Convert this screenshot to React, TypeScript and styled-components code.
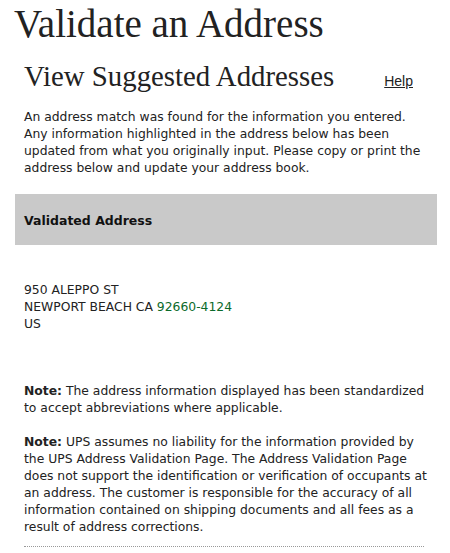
import React from 'react';
import styled, { createGlobalStyle } from 'styled-components';

const GlobalStyle = createGlobalStyle`
  body {
    margin: 0;
    background: #fff;
    color: #222;
    font-family: Tahoma, 'DejaVu Sans', sans-serif;
  }
`;

const Page = styled.div`
  width: 450px;
  padding: 0 13px 0 15px;
  box-sizing: border-box;
`;

const Title = styled.h1`
  margin: 0;
  padding: 4px 0 0 0;
  margin-left: -1px;
  font-family: Georgia, 'Liberation Serif', serif;
  font-weight: normal;
  font-size: 39px;
  line-height: 40px;
  color: #222;
`;

const HeaderRow = styled.div`
  display: flex;
  align-items: baseline;
  justify-content: space-between;
  padding: 16px 24px 0 9px;
`;

const SubTitle = styled.h2`
  margin: 0;
  font-family: Georgia, 'Liberation Serif', serif;
  font-weight: normal;
  font-size: 28.8px;
  line-height: 32px;
  color: #222;
`;

const HelpLink = styled.a`
  font-family: 'Liberation Sans', Arial, sans-serif;
  font-size: 14px;
  color: #222;
  text-decoration: underline;
`;

const Text = styled.p<{ $top?: number }>`
  margin: ${(p) => p.$top ?? 0}px 0 0 0;
  padding: 0 0 0 9px;
  font-family: 'DejaVu Sans', sans-serif;
  font-size: 12.35px;
  line-height: 17px;
  white-space: nowrap;
  color: #222;
`;

const Bar = styled.div`
  margin-top: 17px;
  height: 50px;
  background: #c9c9c9;
  display: flex;
  align-items: center;
  padding: 1px 0 0 9px;
  font-family: 'DejaVu Sans', sans-serif;
  font-size: 12.5px;
  font-weight: bold;
  color: #111;
`;

const Zip = styled.span`
  color: #0b6a2a;
`;

const Rule = styled.hr`
  margin: 10px 13px 0 9px;
  border: 0;
  border-top: 1px dotted #999;
`;

const lines = (rows: React.ReactNode[]) =>
  rows.map((row, idx) => (
    <React.Fragment key={idx}>
      {idx > 0 && <br />}
      {row}
    </React.Fragment>
  ));

export default function App() {
  return (
    <Page>
      <GlobalStyle />
      <Title>Validate an Address</Title>
      <HeaderRow>
        <SubTitle>View Suggested Addresses</SubTitle>
        <HelpLink href="#">Help</HelpLink>
      </HeaderRow>
      <Text $top={17}>
        {lines([
          'An address match was found for the information you entered.',
          'Any information highlighted in the address below has been',
          'updated from what you originally input. Please copy or print the',
          'address below and update your address book.',
        ])}
      </Text>
      <Bar>Validated Address</Bar>
      <Text $top={37}>
        {lines([
          '950 ALEPPO ST',
          <>
            NEWPORT BEACH CA <Zip>92660-4124</Zip>
          </>,
          'US',
        ])}
      </Text>
      <Text $top={50}>
        {lines([
          <>
            <b>Note:</b> The address information displayed has been standardized
          </>,
          'to accept abbreviations where applicable.',
        ])}
      </Text>
      <Text $top={17}>
        {lines([
          <>
            <b>Note:</b> UPS assumes no liability for the information provided by
          </>,
          'the UPS Address Validation Page. The Address Validation Page',
          'does not support the identification or verification of occupants at',
          'an address. The customer is responsible for the accuracy of all',
          'information contained on shipping documents and all fees as a',
          'result of address corrections.',
        ])}
      </Text>
      <Rule />
    </Page>
  );
}
